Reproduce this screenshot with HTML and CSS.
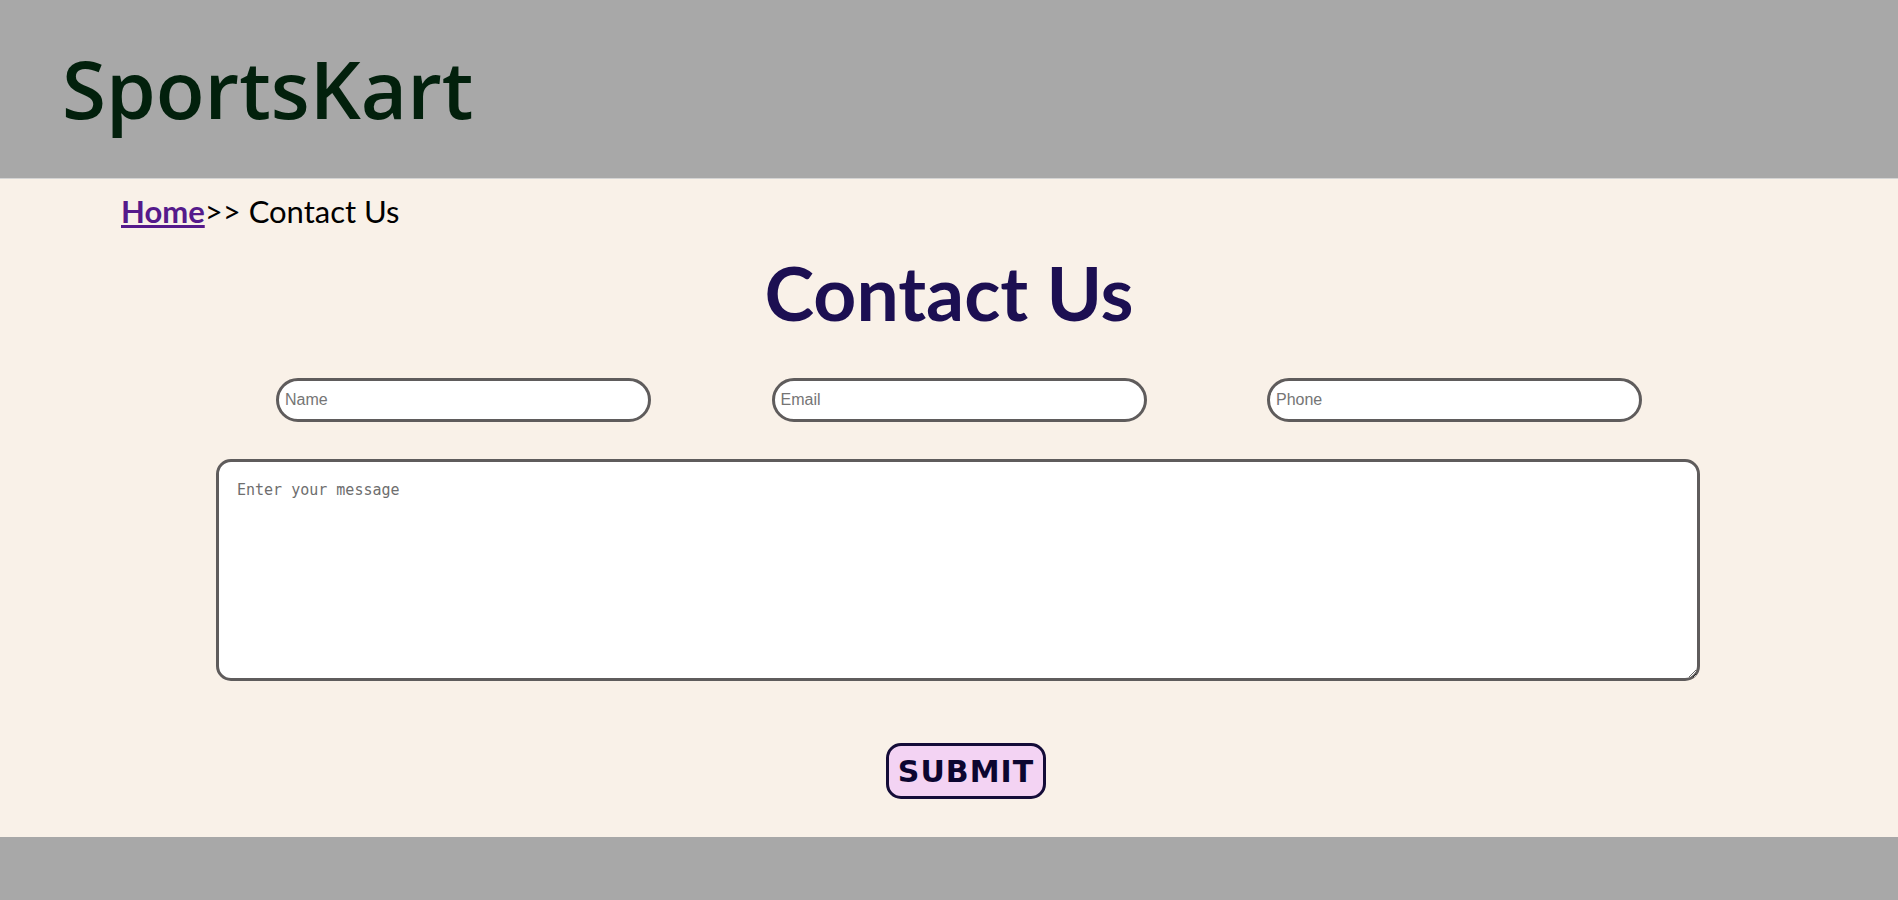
FILE: index.html
```html
<!DOCTYPE html>
<html lang="en">
<head>
<meta charset="utf-8">
<title>SportsKart - Contact Us</title>
<link rel="stylesheet" href="styles.css">
</head>
<body>
<header class="site-header">
  <h1 class="logo">SportsKart</h1>
</header>
<main class="content">
  <nav class="breadcrumb"><a class="crumb-link" href="#">Home</a>&gt;&gt; Contact Us</nav>
  <h2 class="title">Contact Us</h2>
  <form class="contact-form">
    <div class="field-row">
      <input class="field" type="text" placeholder="Name">
      <input class="field" type="email" placeholder="Email">
      <input class="field" type="tel" placeholder="Phone">
    </div>
    <textarea class="message" placeholder="Enter your message"></textarea>
    <button class="submit" type="button">SUBMIT</button>
  </form>
</main>
<footer class="site-footer"></footer>
</body>
</html>
```
FILE: styles.css
```css
html, body {
  margin: 0;
  padding: 0;
}
body {
  font-family: Lato, "Open Sans", sans-serif;
  background: #f9f1e8;
  width: 1898px;
  height: 900px;
  overflow: hidden;
}
.site-header {
  height: 179px;
  background: #a8a8a8;
  display: flex;
  align-items: center;
  padding-left: 62px;
  border-bottom: 1px solid #d4d4d4;
  box-sizing: border-box;
}
.logo {
  margin: 0;
  font-family: "Open Sans", Lato, sans-serif;
  font-weight: 600;
  font-size: 80px;
  line-height: 1;
  color: #02200c;
  margin-top: -3px;
}
.content {
  height: 658px;
  background: #f9f1e8;
  display: flex;
  flex-direction: column;
}
.breadcrumb {
  padding-left: 121px;
  margin-top: 14px;
  font-size: 31px;
  line-height: 36px;
  color: #000;
}
.crumb-link {
  color: #551a8b;
  font-weight: 700;
  text-decoration: underline;
}
.title {
  margin: 18px 0 0;
  text-align: center;
  font-size: 75px;
  line-height: 90px;
  font-weight: 700;
  color: #1c0f52;
}
.contact-form {
  display: flex;
  flex-direction: column;
  align-items: flex-start;
}
.field-row {
  display: flex;
  gap: 120.5px;
  padding-left: 276px;
  margin-top: 41px;
}
.field {
  width: 375px;
  height: 44px;
  box-sizing: border-box;
  border: 3px solid #5f5c5c;
  border-radius: 22px;
  background: #fff;
  padding: 0 6px;
  font-family: "Liberation Sans", Arial, sans-serif;
  font-size: 16px;
  color: #000;
  outline: none;
}
.field::placeholder {
  color: #757575;
}
.message {
  margin: 37px 0 0 216px;
  width: 1484px;
  height: 222px;
  box-sizing: border-box;
  border: 3px solid #5f5c5c;
  border-radius: 15px;
  background: #fff;
  padding: 19px 18px;
  font-family: "DejaVu Sans Mono", "Liberation Mono", monospace;
  font-size: 15px;
  outline: none;
}
.message::placeholder {
  color: #6e6e6e;
}
.submit {
  margin: 62px 0 0 886px;
  width: 160px;
  height: 56px;
  box-sizing: border-box;
  border: 3px solid #140c38;
  border-radius: 15px;
  background: #f3d3f3;
  color: #0c0630;
  font-family: "DejaVu Sans", Verdana, sans-serif;
  font-weight: 700;
  font-size: 30px;
  letter-spacing: 1px;
  padding: 0;
  cursor: pointer;
}
.site-footer {
  height: 63px;
  background: #a8a8a8;
}
```
